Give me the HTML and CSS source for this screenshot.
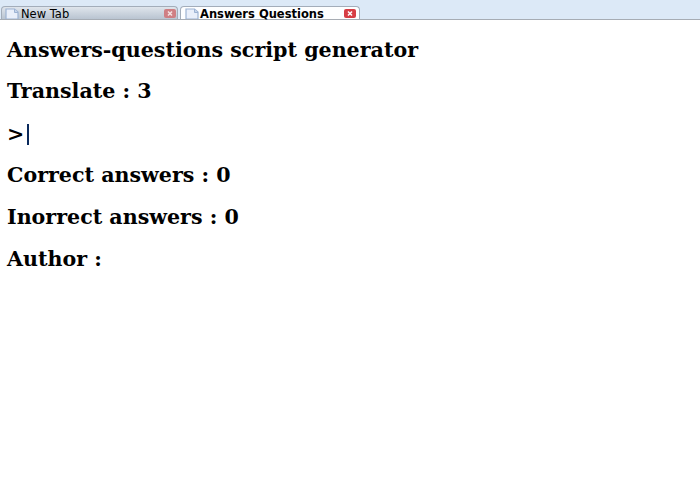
FILE: index.html
```html
<!DOCTYPE html>
<html>
<head>
<meta charset="utf-8">
<title>Answers Questions</title>
<link rel="stylesheet" href="styles.css">
</head>
<body>
<div class="tabbar">
  <div class="tab inactive">
    <svg class="fav" width="14" height="11" viewBox="0 0 14 11"><path d="M1 1H9.5L13 4V11H1Z" fill="#e9effa" stroke="#9db3d3" stroke-width="1.2"/><path d="M9.5 1V4.5H13" fill="#c6d5ea" stroke="#9db3d3"/></svg>
    <span class="tab-label">New Tab</span>
    <span class="close"><svg width="12" height="9" viewBox="0 0 12 9"><path d="M4 2.5L8 6.5M8 2.5L4 6.5" stroke="#f4e4e4" stroke-width="1.5"/></svg></span>
  </div>
  <div class="tab active">
    <svg class="fav" width="14" height="11" viewBox="0 0 14 11"><path d="M1 1H9.5L13 4V11H1Z" fill="#e9effa" stroke="#9db3d3" stroke-width="1.2"/><path d="M9.5 1V4.5H13" fill="#c6d5ea" stroke="#9db3d3"/></svg>
    <span class="tab-label">Answers Questions</span>
    <span class="close"><svg width="12" height="9" viewBox="0 0 12 9"><path d="M4 2.5L8 6.5M8 2.5L4 6.5" stroke="#fff" stroke-width="1.5"/></svg></span>
  </div>
</div>
<main class="content">
  <h3>Answers-questions script generator</h3>
  <h3>Translate : 3</h3>
  <h3 class="prompt">&gt;<span class="caret"></span></h3>
  <h3>Correct answers : 0</h3>
  <h3 class="wide-gap">Inorrect answers : 0</h3>
  <h3 class="wide-gap">Author :</h3>
</main>
</body>
</html>
```
FILE: styles.css
```css
html, body { margin: 0; padding: 0; background: #fff; }
body { height: 490px; overflow: hidden; }
.tabbar {
  height: 19px;
  background: #dce9f7;
  border-bottom: 1px solid #a6acb4;
  display: flex;
  align-items: flex-end;
  padding-left: 1px;
  gap: 2px;
}
.tab {
  height: 13px;
  box-sizing: border-box;
  display: flex;
  align-items: flex-start;
  border: 1px solid #a3adba;
  border-bottom: 0;
  border-radius: 4px 4px 0 0;
  padding: 0 3px;
  font-family: "DejaVu Sans", sans-serif;
  font-size: 11.5px;
  color: #000;
}
.inactive { width: 177px; padding-right: 1px; background: linear-gradient(#dfe5ec, #b9c4d1); }
.active { width: 180px; background: #fdfeff; padding-left: 4px; font-weight: bold; }
.fav { flex: none; margin: 1px 2px 0 0; }
.active .fav { margin-right: 1px; }
.tab-label { flex: 1; height: 9px; line-height: 9px; margin-top: 3px; white-space: nowrap; }
.close {
  flex: none; width: 12px; height: 9px; border-radius: 2px;
  background: #d63d45; display: flex; margin-top: 2px;
}
.inactive .close { background: #cf7f84; }
.content {
  padding: 0 7px;
  font-family: "DejaVu Serif", serif;
}
h3 {
  margin: 0;
  font-size: 20.6px;
  font-weight: bold;
  line-height: 24px;
  padding-top: 17px;
  color: #000;
}
h3:first-child { padding-top: 18px; }
h3.prompt { padding-top: 19px; }
h3.wide-gap { padding-top: 18px; }
.caret {
  display: inline-block; width: 2px; height: 21px;
  background: #0a2a5c; vertical-align: -4px; margin-left: 3px;
}
```
